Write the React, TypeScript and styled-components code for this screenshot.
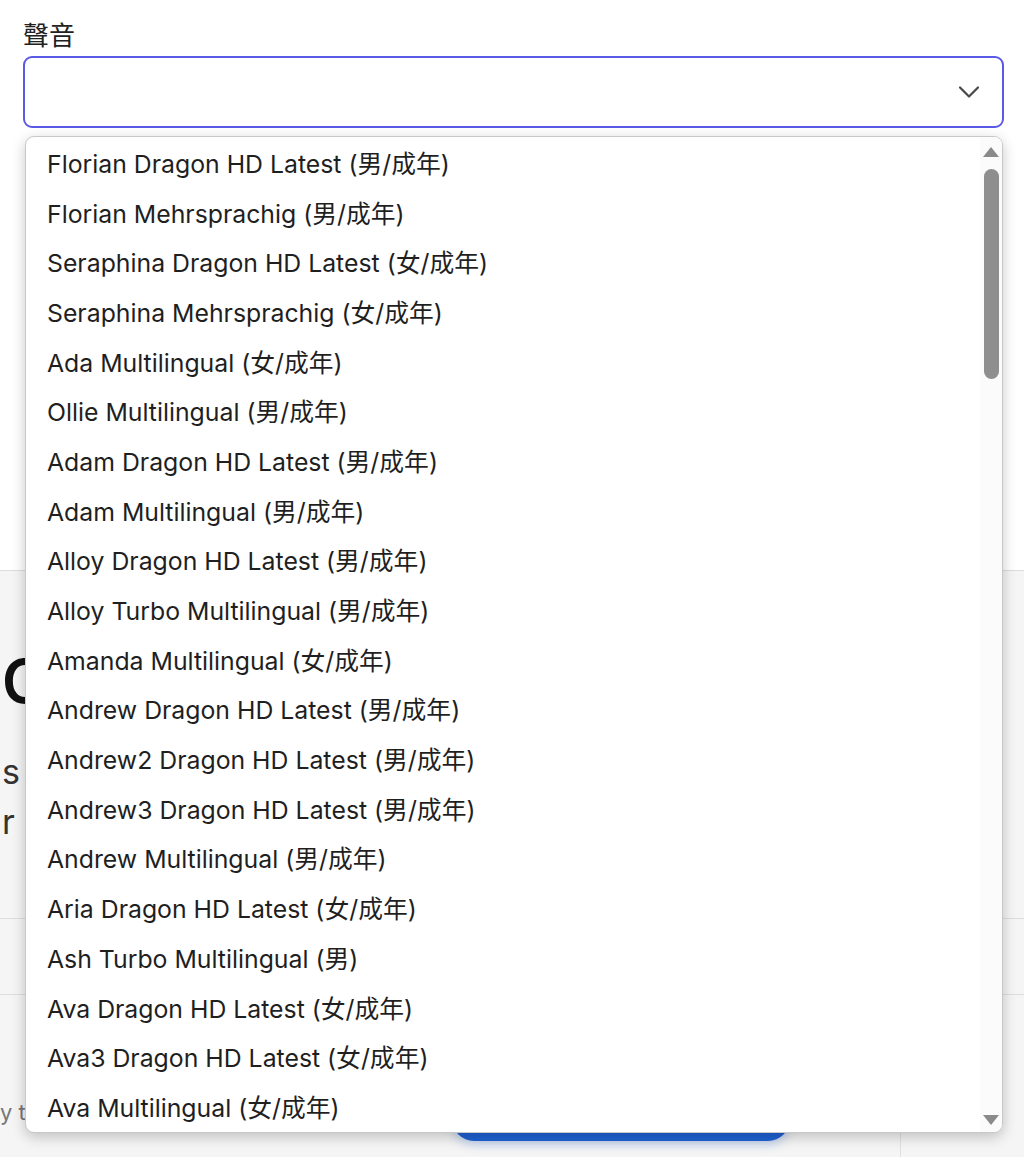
import React from 'react';
import styled, { createGlobalStyle } from 'styled-components';
import { ChevronDown } from 'lucide-react';

type Voice = {
  name: string;
  tag: string;
};

const VOICES: Voice[] = [
  { name: 'Florian Dragon HD Latest', tag: '(男/成年)' },
  { name: 'Florian Mehrsprachig', tag: '(男/成年)' },
  { name: 'Seraphina Dragon HD Latest', tag: '(女/成年)' },
  { name: 'Seraphina Mehrsprachig', tag: '(女/成年)' },
  { name: 'Ada Multilingual', tag: '(女/成年)' },
  { name: 'Ollie Multilingual', tag: '(男/成年)' },
  { name: 'Adam Dragon HD Latest', tag: '(男/成年)' },
  { name: 'Adam Multilingual', tag: '(男/成年)' },
  { name: 'Alloy Dragon HD Latest', tag: '(男/成年)' },
  { name: 'Alloy Turbo Multilingual', tag: '(男/成年)' },
  { name: 'Amanda Multilingual', tag: '(女/成年)' },
  { name: 'Andrew Dragon HD Latest', tag: '(男/成年)' },
  { name: 'Andrew2 Dragon HD Latest', tag: '(男/成年)' },
  { name: 'Andrew3 Dragon HD Latest', tag: '(男/成年)' },
  { name: 'Andrew Multilingual', tag: '(男/成年)' },
  { name: 'Aria Dragon HD Latest', tag: '(女/成年)' },
  { name: 'Ash Turbo Multilingual', tag: '(男)' },
  { name: 'Ava Dragon HD Latest', tag: '(女/成年)' },
  { name: 'Ava3 Dragon HD Latest', tag: '(女/成年)' },
  { name: 'Ava Multilingual', tag: '(女/成年)' },
];

const GlobalStyle = createGlobalStyle`
  html, body {
    margin: 0;
    padding: 0;
    background: #ffffff;
  }
  body {
    font-family: Inter, "Noto Sans CJK TC", "Noto Sans", sans-serif;
    color: #1f1f1f;
    overflow: hidden;
  }
`;

export default function App() {
  return (
    <>
      <GlobalStyle />
      <Page>
        <FormSection>
          <Field>
            <FieldLabel>聲音</FieldLabel>
            <SelectWrap>
              <SelectBox>
                <ChevronDown size={36} color="#4a4a4a" strokeWidth={1.5} />
              </SelectBox>
              <Listbox>
                <Options>
                  {VOICES.map((v) => (
                    <Option key={v.name}>
                      {v.name} {v.tag}
                    </Option>
                  ))}
                </Options>
                <Scrollbar>
                  <Arrow $dir="up" />
                  <Track>
                    <Thumb />
                  </Track>
                  <Arrow $dir="down" />
                </Scrollbar>
              </Listbox>
            </SelectWrap>
          </Field>
        </FormSection>

        <IntroSection>
          <Heading>C</Heading>
          <Lead>s</Lead>
          <Lead>r</Lead>
        </IntroSection>

        <NoteSection />

        <Footer>
          <Hint>y t</Hint>
          <PrimaryButton />
          <FooterDivider />
        </Footer>
      </Page>
    </>
  );
}

const Page = styled.div`
  width: 1024px;
  height: 1157px;
  display: flex;
  flex-direction: column;
  background: #f5f5f5;
`;

const FormSection = styled.section`
  height: 571px;
  flex-shrink: 0;
  background: #ffffff;
  border-bottom: 1px solid #dcdcdc;
  padding: 21px 20px 0 23px;
  box-sizing: border-box;
`;

const Field = styled.div`
  display: flex;
  flex-direction: column;
  gap: 5px;
`;

const FieldLabel = styled.label`
  font-size: 26px;
  line-height: 30px;
  color: #222222;
`;

const SelectWrap = styled.div`
  position: relative;
`;

const SelectBox = styled.div`
  height: 72px;
  box-sizing: border-box;
  border: 2px solid #5a5ae6;
  border-radius: 9px;
  background: #ffffff;
  display: flex;
  align-items: center;
  justify-content: flex-end;
  padding-right: 15px;
`;

const Listbox = styled.div`
  position: absolute;
  top: 80px;
  left: 2px;
  right: 1px;
  height: 997px;
  box-sizing: border-box;
  background: #ffffff;
  border: 1px solid #c8c8c8;
  border-radius: 9px;
  box-shadow: 0 4px 14px rgba(0, 0, 0, 0.22);
  overflow: hidden;
  display: flex;
  z-index: 10;
`;

const Options = styled.ul`
  list-style: none;
  margin: 0;
  padding: 0;
  flex: 1;
`;

const Option = styled.li`
  height: 49.7px;
  display: flex;
  align-items: center;
  padding-left: 21px;
  font-size: 24.8px;
  color: #1f1f1f;
  white-space: nowrap;
`;

const Scrollbar = styled.div`
  width: 22px;
  display: flex;
  flex-direction: column;
  align-items: center;
  padding: 10px 0 7px;
  box-sizing: border-box;
  background: #fbfbfb;
`;

const Arrow = styled.div<{ $dir: 'up' | 'down' }>`
  width: 0;
  height: 0;
  border-left: 8px solid transparent;
  border-right: 8px solid transparent;
  ${(p) =>
    p.$dir === 'up'
      ? 'border-bottom: 10px solid #8a8a8a;'
      : 'border-top: 10px solid #8a8a8a;'}
`;

const Track = styled.div`
  flex: 1;
  width: 100%;
  display: flex;
  justify-content: center;
  padding-top: 12px;
`;

const Thumb = styled.div`
  width: 15px;
  height: 210px;
  border-radius: 8px;
  background: #8e8e8e;
`;

const IntroSection = styled.section`
  height: 348px;
  flex-shrink: 0;
  border-bottom: 1px solid #dedede;
  padding: 74px 0 0 2px;
  box-sizing: border-box;
  white-space: nowrap;
  overflow: hidden;
`;

const Heading = styled.h1`
  margin: 0 0 30px;
  font-size: 60px;
  font-weight: 600;
  line-height: 72px;
  color: #111111;
`;

const Lead = styled.p`
  margin: 0;
  font-size: 34px;
  line-height: 50px;
  color: #333333;
`;

const NoteSection = styled.section`
  height: 75px;
  flex-shrink: 0;
  border-bottom: 1px solid #dedede;
`;

const Footer = styled.footer`
  flex: 1;
  display: flex;
  align-items: flex-end;
  padding-bottom: 16px;
  box-sizing: border-box;
  white-space: nowrap;
  overflow: hidden;
`;

const Hint = styled.span`
  width: 452px;
  flex-shrink: 0;
  align-self: center;
  margin-top: 88px;
  font-size: 22px;
  color: #777777;
`;

const PrimaryButton = styled.button`
  width: 338px;
  height: 70px;
  flex-shrink: 0;
  border: none;
  border-radius: 22px;
  background: #1f62d4;
  box-shadow: 0 4px 10px rgba(31, 98, 212, 0.25);
`;

const FooterDivider = styled.div`
  width: 1px;
  height: 60px;
  align-self: flex-end;
  margin: 0 0 -16px 110px;
  background: #e0e0e0;
`;
